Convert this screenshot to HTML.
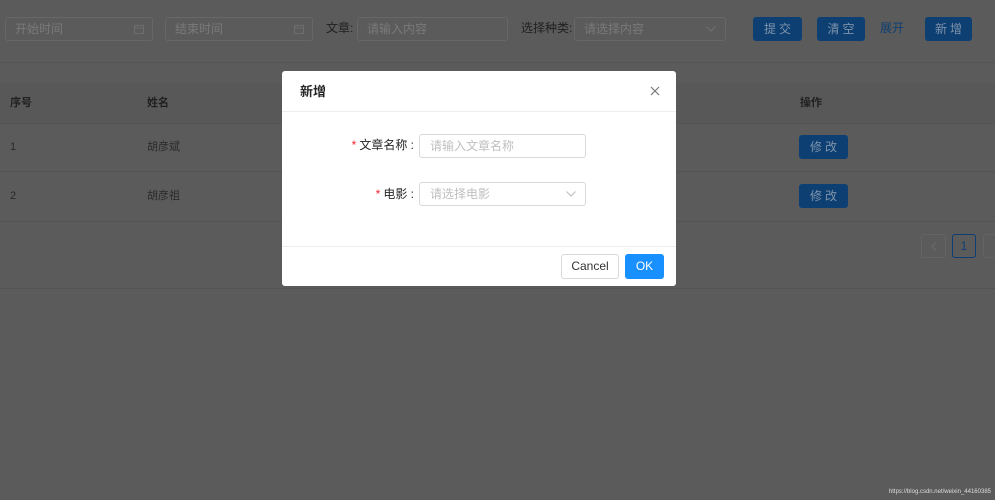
<!DOCTYPE html>
<html style="background:#5b5b5b"><head><meta charset="utf-8"><style>
*{box-sizing:border-box;margin:0;padding:0}
html,body{width:995px;height:500px;background:#5b5b5b;overflow:hidden}
body{font-family:"Liberation Sans","Noto Sans CJK SC",sans-serif;font-size:12px;color:#1f1f1f;position:relative}
#bg{position:absolute;left:0;top:0;width:995px;height:500px;background:#5b5b5b}
.a{position:absolute}
.inp{position:absolute;border:1px solid #676767;border-radius:3px;height:24px;color:#7a7a7a;padding-left:9px;line-height:22px;font-size:12px;background:#5b5b5b}
.btn{position:absolute;background:#0d3f72;color:#7f93ab;border-radius:3px;text-align:center;line-height:24px;height:24px;font-size:12px;letter-spacing:3px;text-indent:3px}
.line{position:absolute;left:0;width:995px;height:1px;background:#545454}
.t{position:absolute;font-size:11px;line-height:12px;color:#202020;white-space:nowrap}
.modal{position:absolute;left:282px;top:71px;width:394px;height:215px;background:#fff;border-radius:3px}
.mi{position:absolute;border:1px solid #d9d9d9;border-radius:3px;height:24px;color:#bfbfbf;padding-left:10px;line-height:22px;font-size:12px;width:167px;left:137px}
.lab{position:absolute;right:262px;font-size:12px;line-height:14px;color:#262626}
.lab b{color:#f5222d;font-weight:normal;margin-right:3px}
</style></head><body>
<div id="bg"></div>
<div class="inp" style="left:5px;top:17px;width:148px">开始时间<svg class="a" style="right:8px;top:6px" width="10" height="10"><rect x="0.5" y="1.5" width="9" height="8" fill="none" stroke="#6e6e6e"/><path d="M0.5 4H9.5" stroke="#6e6e6e"/></svg></div>
<div class="inp" style="left:165px;top:17px;width:148px">结束时间<svg class="a" style="right:8px;top:6px" width="10" height="10"><rect x="0.5" y="1.5" width="9" height="8" fill="none" stroke="#6e6e6e"/><path d="M0.5 4H9.5" stroke="#6e6e6e"/></svg></div>
<div class="t" style="left:326px;top:22px;font-size:12px">文章:</div>
<div class="inp" style="left:357px;top:17px;width:151px">请输入内容</div>
<div class="t" style="left:521px;top:22px;font-size:12px">选择种类:</div>
<div class="inp" style="left:574px;top:17px;width:152px">请选择内容<svg class="a" style="right:9px;top:8px" width="10" height="6"><path d="M0.5 0.5L5 5L9.5 0.5" fill="none" stroke="#707070"/></svg></div>
<div class="btn" style="left:753px;top:17px;width:49px">提交</div>
<div class="btn" style="left:817px;top:17px;width:48px">清空</div>
<div class="t" style="left:880px;top:22px;font-size:12px;color:#0d3f72">展开</div>
<div class="btn" style="left:925px;top:17px;width:47px">新增</div>
<div class="line" style="top:62px"></div>
<div class="a" style="left:0;top:83px;width:995px;height:40px;background:#585858"></div>
<div class="t" style="left:10px;top:97px;font-weight:bold">序号</div>
<div class="t" style="left:147px;top:97px;font-weight:bold">姓名</div>
<div class="t" style="left:800px;top:97px;font-weight:bold">操作</div>
<div class="line" style="top:123px"></div>
<div class="t" style="left:10px;top:141px;color:#2a2a2a">1</div>
<div class="t" style="left:147px;top:141px;color:#2a2a2a">胡彦斌</div>
<div class="btn" style="left:799px;top:135px;width:49px">修改</div>
<div class="line" style="top:171px"></div>
<div class="t" style="left:10px;top:190px;color:#2a2a2a">2</div>
<div class="t" style="left:147px;top:190px;color:#2a2a2a">胡彦祖</div>
<div class="btn" style="left:799px;top:184px;width:49px">修改</div>
<div class="line" style="top:221px"></div>
<div class="a" style="left:921px;top:234px;width:25px;height:24px;border:1px solid #646464;border-radius:3px"><svg class="a" style="left:9px;top:7px" width="6" height="9"><path d="M5 0.5L1 4.5L5 8.5" fill="none" stroke="#6a6a6a"/></svg></div>
<div class="a" style="left:952px;top:234px;width:24px;height:24px;border:1px solid #0d3f72;border-radius:3px;color:#0d3f72;text-align:center;line-height:22px;font-size:12px">1</div>
<div class="a" style="left:983px;top:234px;width:25px;height:24px;border:1px solid #646464;border-radius:3px"></div>
<div class="line" style="top:288px"></div>
<div class="a" style="right:4px;top:489px;font-size:6px;line-height:7px;color:#ddd">https://blog.csdn.net/weixin_44160385</div>
<div class="modal">
<div class="a" style="left:18px;top:13px;font-size:13px;line-height:15px;font-weight:bold;color:#262626">新增</div>
<svg class="a" style="left:368px;top:15px" width="10" height="10" viewBox="0 0 10 10"><path d="M1 1L9 9M9 1L1 9" stroke="#777" stroke-width="1.2"/></svg>
<div class="a" style="left:0;top:40px;width:394px;height:1px;background:#eee"></div>
<div class="lab" style="top:67px"><b>*</b>文章名称 :</div>
<div class="mi" style="top:63px">请输入文章名称</div>
<div class="lab" style="top:116px"><b>*</b>电影 :</div>
<div class="mi" style="top:111px">请选择电影<svg class="a" style="right:9px;top:8px" width="10" height="6"><path d="M0.5 0.5L5 5L9.5 0.5" fill="none" stroke="#bbb"/></svg></div>
<div class="a" style="left:0;top:175px;width:394px;height:1px;background:#eee"></div>
<div class="a" style="left:279px;top:183px;width:58px;height:25px;border:1px solid #d9d9d9;border-radius:3px;text-align:center;line-height:23px;font-size:12px;color:#333">Cancel</div>
<div class="a" style="left:343px;top:183px;width:39px;height:25px;background:#1890ff;border-radius:3px;text-align:center;line-height:25px;font-size:12px;color:#fff">OK</div>
</div>
</body></html>
